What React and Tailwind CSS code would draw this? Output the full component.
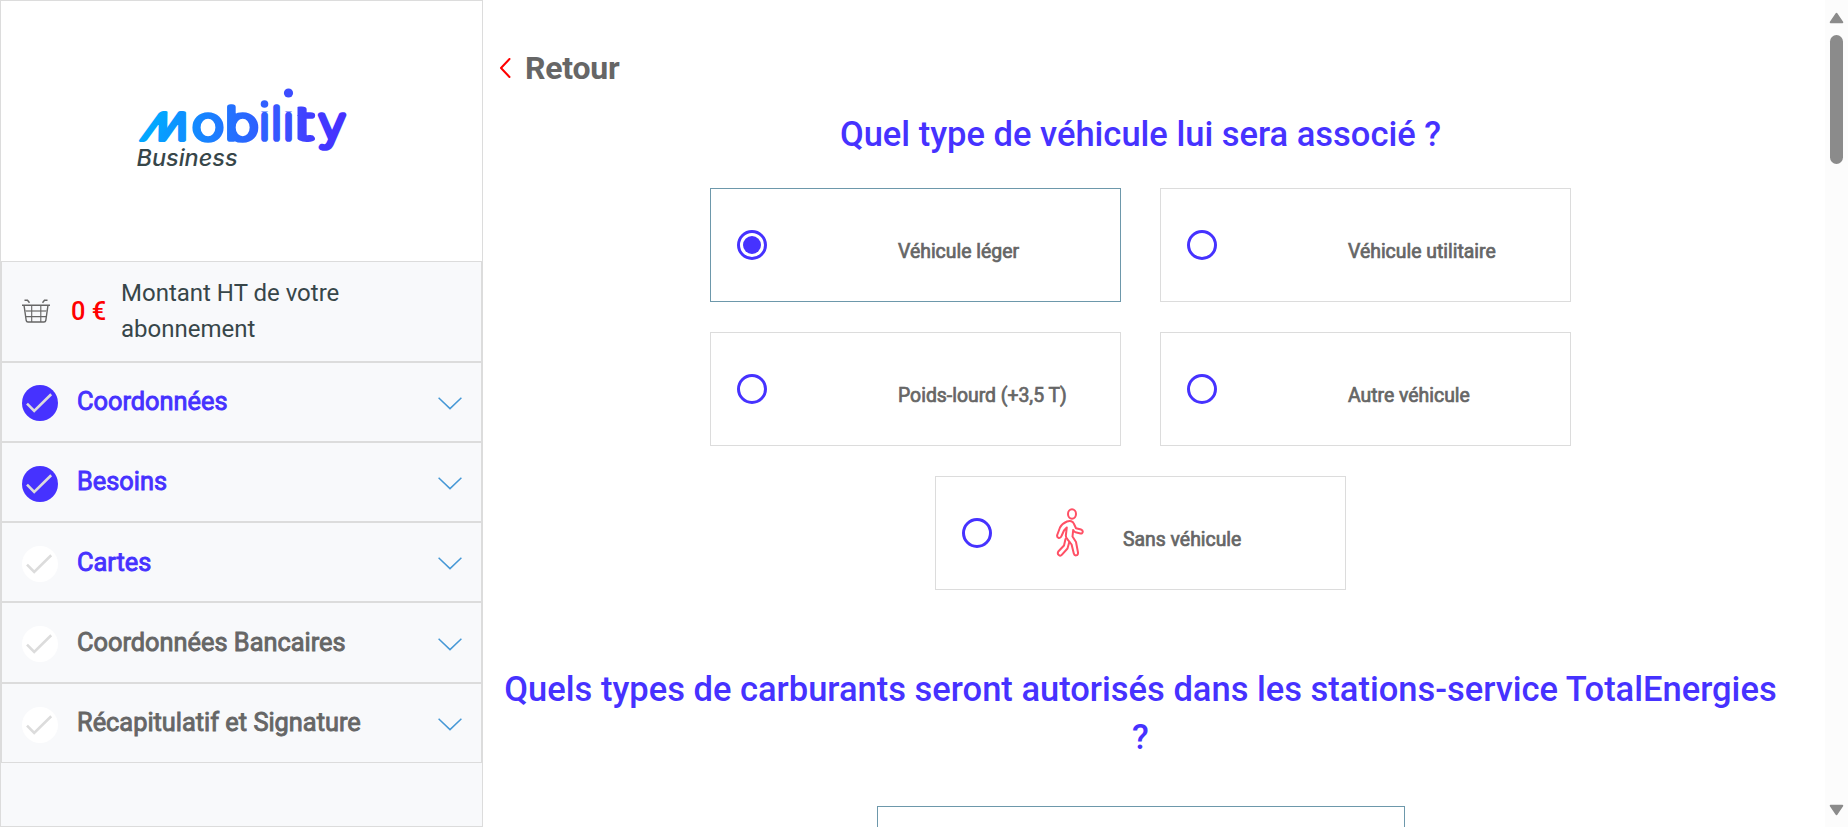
import React from "react";

const steps = [
  { label: "Coordonnées", done: true, active: true, height: "h-20", badge: "pt-px", text: "mb-[3px]" },
  { label: "Besoins", done: true, active: true, height: "h-20", badge: "pt-[3px]", text: "mb-[3px]" },
  { label: "Cartes", done: false, active: true, height: "h-20", badge: "pt-[3px]", text: "mb-px" },
  { label: "Coordonnées Bancaires", done: false, active: false, height: "h-[81px]", badge: "pt-[3px]", text: "mb-px" },
  { label: "Récapitulatif et Signature", done: false, active: false, height: "h-20", badge: "pt-[3px]", text: "mb-[3px]" },
];

const letters = [
  { ch: "o", x: 88, w: 31, from: "#128cff", to: "#2077ff" },
  { ch: "b", x: 121.8, w: 33, from: "#2175ff", to: "#2f60ff" },
  { ch: "i", x: 144.5, from: "#3160ff", to: "#3160ff", clip: "url(#stem)" },
  { ch: "l", x: 156.5, from: "#3657ff", to: "#3657ff" },
  { ch: "i", x: 168.5, from: "#3b4eff", to: "#3b4eff", clip: "url(#stem)" },
  { ch: "t", x: 182.800, w: 18, from: "#3e49ff", to: "#423dff", clip: "url(#bar)" },
  { ch: "y", x: 212, w: 27, from: "#423aff", to: "#4630ff" },
];

function Logo() {
  return (
    <svg width="230" height="96" viewBox="0 0 230 96" role="img" aria-label="mobility Business">
      <defs>
        <clipPath id="stem">
          <rect x="130" y="31.400" width="50" height="50" />
        </clipPath>
        <clipPath id="bar">
          <rect x="177.500" y="10" width="40" height="60" />
        </clipPath>
        <clipPath id="mLeft">
          <rect x="-10" y="-45" width="37" height="60" />
        </clipPath>
        <clipPath id="mRight">
          <rect x="25.500" y="-45" width="40" height="60" />
        </clipPath>
        <linearGradient id="inkM" gradientUnits="userSpaceOnUse" x1="0" y1="0" x2="54" y2="0">
          <stop offset="0" stopColor="#00aaff" />
          <stop offset="1" stopColor="#108eff" />
        </linearGradient>
        <text id="em" x="0" y="0" fontFamily="Inter" fontWeight="100" fontSize="37" textLength="54" lengthAdjust="spacingAndGlyphs" fill="url(#inkM)" stroke="url(#inkM)" strokeWidth="4" strokeLinejoin="round">
          M
        </text>
      </defs>
      <g transform="translate(15.500 59.700)">
        <g transform="skewX(-36)">
          <use href="#em" clipPath="url(#mLeft)" />
        </g>
        <use href="#em" clipPath="url(#mRight)" />
      </g>
      <g fontFamily="Inter" fontWeight="100" fontSize="44" textAnchor="middle" strokeLinejoin="round" strokeLinecap="round" strokeWidth="5.700">
        {letters.map((l, i) => {
          const ink = l.from === l.to ? l.from : `url(#ink${i})`;
          return (
            <React.Fragment key={i}>
              <linearGradient id={`ink${i}`}>
                <stop offset="0" stopColor={l.from} />
                <stop offset="1" stopColor={l.to} />
              </linearGradient>
              <text
                x={l.x}
                y="58.700"
                textLength={l.w}
                lengthAdjust={l.w ? "spacingAndGlyphs" : undefined}
                fill={ink}
                stroke={ink}
                clipPath={l.clip}
              >
                {l.ch}
              </text>
            </React.Fragment>
          );
        })}
      </g>
      <circle cx="144.500" cy="24" r="3.800" fill="#3160ff" />
      <circle cx="168.500" cy="13" r="4.600" fill="#3c4dff" />
      <text x="16.500" y="86" fontFamily="Inter" fontStyle="italic" fontWeight="500" fontSize="22.500" fill="#374649" textLength="101" lengthAdjust="spacingAndGlyphs">
        Business
      </text>
    </svg>
  );
}

function Basket() {
  return (
    <svg className="mb-[2px]" width="28" height="24" viewBox="0 0 28 24" fill="none" stroke="#666" strokeWidth="1.1">
      <path d="M0 6.200H28M2.500 1.200H5.500L7.500 3.800M25.500 1.200H22.500L20.500 3.800" strokeWidth="1.400" />
      <path d="M2 6.200L4.200 21.500Q4.500 23 6 23H22Q23.500 23 23.800 21.500L26 6.200" strokeWidth="1.400" />
      <path d="M3 12H25" stroke="#999" strokeWidth="1.800" />
      <path d="M4 17.600H24M9.700 6.200V23M18.800 6.200V23" />
    </svg>
  );
}

function Badge({ done }) {
  return (
    <svg className="shrink-0" width="36" height="36" viewBox="0 0 36 36">
      <circle cx="18" cy="18" r="18" fill={done ? "#4632ff" : "#ffffff"} />
      <path d="M5 18.700L12.200 26L29.200 9.300" fill="none" stroke="#dcdcdc" strokeWidth="2.600" />
    </svg>
  );
}

function Radio({ checked }) {
  return (
    <span className="flex size-[30px] shrink-0 items-center justify-center rounded-full border-[3px] border-[#4632ff]">
      {checked && <span className="size-[18px] rounded-full bg-[#4632ff]" />}
    </span>
  );
}

function Walker() {
  return (
    <svg width="28" height="49" viewBox="0 0 28 49" fill="none" stroke="#ff5065" strokeWidth="2" strokeLinejoin="round" strokeLinecap="round">
      <ellipse cx="16" cy="6" rx="4" ry="4.700" />
      <path d="M11 13.500C14 12.300 17 13 18 16L20 20.200L25 21.500C27.600 22.300 27.200 26 24.500 25.500L19.500 24.200C18.500 24 17.800 23.200 17.200 22L16.500 28.500L20 34L22 44.500C22.300 48 18.500 48.300 17.800 45.500L15.600 36.500L11.500 31.300C9.800 29.800 9.700 28.500 9.900 27L10.800 19.500L8 22.500L5.500 28C4.300 31.300 .5 30.200 1.200 27L4 19.500C5.500 16.500 8.500 14.500 11 13.500Z" />
      <path d="M9.500 31L8 37.500L2.300 43.500C.7 46.500 4 49 6 46.700L11.500 40.500L13.300 34" />
    </svg>
  );
}

function Option({ label, checked, icon }) {
  return (
    <div className={`flex h-[114px] w-[411px] border pl-[26px] ${checked ? "border-[#6d98ab]" : "border-[#dcdcdc]"}`}>
      <div className="flex w-[94px] pt-[41px]">
        <Radio checked={checked} />
      </div>
      <div className="w-[67px] pt-[31px]">{icon}</div>
      <span className="pt-[49px] text-[19.4px] leading-[28px] text-[#666] [-webkit-text-stroke:0.7px_#666]">{label}</span>
    </div>
  );
}

export default function App() {
  return (
    <div className="flex h-[827px] w-[1848px] overflow-hidden bg-white font-['Roboto',sans-serif]">
      <aside className="flex w-[483px] shrink-0 flex-col border border-[#dcdcdc] bg-[#f8f9fb]">
        <div className="flex h-[260px] shrink-0 bg-white pl-[119px] pt-[79px]">
          <Logo />
        </div>
        <div className="flex h-[101px] shrink-0 items-center border border-[#dcdcdc] pl-5">
          <Basket />
          <span className="ml-[21px] w-[50px] text-[25.4px] font-medium text-[#ff0000]">0 €</span>
          <span className="mb-[2px] w-[260px] text-[24px] leading-[36px] text-[#374649]">Montant HT de votre abonnement</span>
        </div>
        {steps.map((s) => (
          <div key={s.label} className={`flex shrink-0 items-center border border-[#dcdcdc] pl-5 pr-[19px] ${s.height}`}>
            <div className={s.badge}>
              <Badge done={s.done} />
            </div>
            <span
              className={`ml-[19px] flex-1 text-[25.36px] leading-9 ${s.text} ${
                s.active ? "text-[#4632ff] [-webkit-text-stroke:0.9px_#4632ff]" : "text-[#666] [-webkit-text-stroke:0.9px_#666]"
              }`}
            >
              {s.label}
            </span>
            <svg className="mt-[3px]" width="24" height="13" viewBox="0 0 24 13" fill="none" stroke="#4698d6" strokeWidth="1.500">
              <path d="M.6 .8L12 11.600L23.400 .8" />
            </svg>
          </div>
        ))}
      </aside>

      <main className="flex flex-1 flex-col pl-4 pr-[43px]">
        <a className="mt-[45px] flex h-[46px] items-center">
          <svg width="12" height="20" viewBox="0 0 12 20" fill="none" stroke="#ff0000" strokeWidth="2" strokeLinecap="round" strokeLinejoin="round">
            <path d="M10.500 1L2 10L10.500 19" />
          </svg>
          <span className="ml-[14px] text-[32px] font-bold tracking-[-0.25px] text-[#666]">Retour</span>
        </a>
        <h2 className="mt-[19px] text-center text-[34.5px] font-medium leading-[48px] text-[#4632ff]">
          Quel type de véhicule lui sera associé ?
        </h2>
        <div className="mt-[30px] flex flex-wrap justify-center gap-x-[39px] gap-y-[30px] px-[180px]">
          <Option label="Véhicule léger" checked />
          <Option label="Véhicule utilitaire" />
          <Option label="Poids-lourd (+3,5 T)" />
          <Option label="Autre véhicule" />
          <Option label="Sans véhicule" icon={<Walker />} />
        </div>
        <h2 className="mt-[75px] text-center text-[34.5px] font-medium leading-[48px] text-[#4632ff]">
          Quels types de carburants seront autorisés dans les stations-service TotalEnergies ?
        </h2>
        <div className="mt-[45px] h-[114px] w-[528px] shrink-0 self-center border border-[#6d98ab]" />
      </main>

      <div className="flex w-[23px] shrink-0 flex-col items-center bg-[#fcfcfc] pt-3 pb-[11px]">
        <svg width="15" height="12" viewBox="0 0 15 12" fill="#8b8b8b" stroke="#8b8b8b" strokeWidth="2" strokeLinejoin="round">
          <path d="M7.500 1.800L13.300 10.200H1.700Z" />
        </svg>
        <div className="mt-[11px] h-[129px] w-[13px] rounded-full bg-[#8b8b8b]" />
        <svg className="mt-auto" width="15" height="12" viewBox="0 0 15 12" fill="#8b8b8b" stroke="#8b8b8b" strokeWidth="2" strokeLinejoin="round">
          <path d="M7.500 10.200L13.300 1.800H1.700Z" />
        </svg>
      </div>
    </div>
  );
}
